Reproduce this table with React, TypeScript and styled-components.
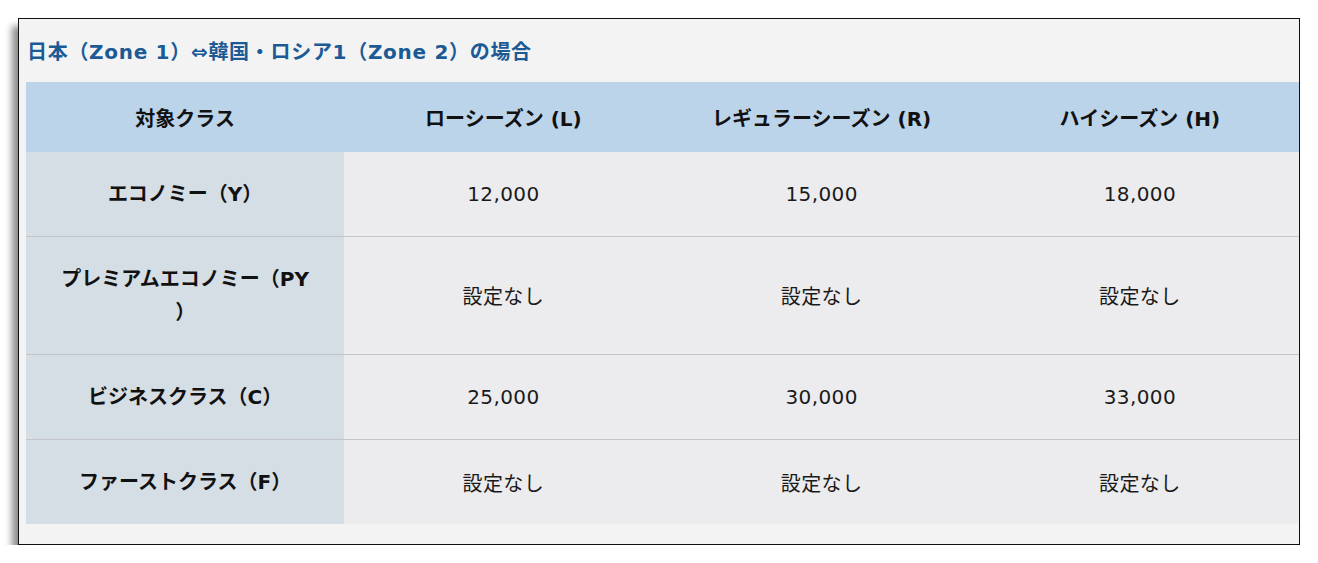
import styled, { createGlobalStyle } from 'styled-components'

const GlobalStyle = createGlobalStyle`
  html, body {
    margin: 0;
    padding: 0;
    background: #ffffff;
  }
  body {
    font-family: 'DejaVu Sans', 'Noto Sans CJK JP', sans-serif;
  }
`

const S = {
  Page: styled.div`
    padding: 18px 0 0 18px;
  `,
  Frame: styled.section`
    width: 1273px;
    height: 525px;
    border: 1px solid #111111;
    background: #f3f3f4;
    box-shadow: -6px 8px 7px rgba(0, 0, 0, 0.45);
    padding: 0 0 0 7px;
    box-sizing: content-box;
    display: flex;
    flex-direction: column;
  `,
  Title: styled.h3`
    margin: 19px 0 16px 1px;
    font-size: 20px;
    line-height: 28px;
    font-weight: 700;
    color: #1c5a95;
    letter-spacing: 0.7px;
    white-space: nowrap;
  `,
  Table: styled.table`
    border-collapse: collapse;
    table-layout: fixed;
    width: 1273px;
    font-size: 20px;
  `,
  HeadCell: styled.th`
    height: 70px;
    padding: 0 12px;
    background: #bcd4ea;
    color: #111111;
    font-weight: 700;
    text-align: center;
    vertical-align: middle;
  `,
  Row: styled.tr<{ $divider: boolean }>`
    border-top: ${({ $divider }) => ($divider ? '1px solid #c3c5c9' : 'none')};
  `,
  LabelCell: styled.th<{ $tall?: boolean }>`
    height: ${({ $tall }) => ($tall ? '117px' : '84px')};
    padding: 0 24px;
    background: #d5dde5;
    color: #111111;
    font-weight: 700;
    line-height: 33px;
    text-align: center;
    vertical-align: middle;
  `,
  ValueCell: styled.td`
    padding: 0 12px;
    background: #ececee;
    color: #1a1a1a;
    font-weight: 400;
    letter-spacing: 0.4px;
    text-align: center;
    vertical-align: middle;
  `,
}

const columns = ['対象クラス', 'ローシーズン (L)', 'レギュラーシーズン (R)', 'ハイシーズン (H)']

type Fare = {
  label: React.ReactNode
  tall?: boolean
  values: string[]
}

const fares: Fare[] = [
  { label: 'エコノミー（Y）', values: ['12,000', '15,000', '18,000'] },
  {
    label: (
      <>
        プレミアムエコノミー（PY
        <br />）
      </>
    ),
    tall: true,
    values: ['設定なし', '設定なし', '設定なし'],
  },
  { label: 'ビジネスクラス（C）', values: ['25,000', '30,000', '33,000'] },
  { label: 'ファーストクラス（F）', values: ['設定なし', '設定なし', '設定なし'] },
]

export default function App() {
  return (
    <>
      <GlobalStyle />
      <S.Page>
        <S.Frame>
          <S.Title>日本（Zone 1）⇔韓国・ロシア1（Zone 2）の場合</S.Title>
          <S.Table>
            <thead>
              <tr>
                {columns.map((c) => (
                  <S.HeadCell key={c}>{c}</S.HeadCell>
                ))}
              </tr>
            </thead>
            <tbody>
              {fares.map((fare, i) => (
                <S.Row key={i} $divider={i > 0}>
                  <S.LabelCell $tall={fare.tall}>{fare.label}</S.LabelCell>
                  {fare.values.map((v, j) => (
                    <S.ValueCell key={j}>{v}</S.ValueCell>
                  ))}
                </S.Row>
              ))}
            </tbody>
          </S.Table>
        </S.Frame>
      </S.Page>
    </>
  )
}
